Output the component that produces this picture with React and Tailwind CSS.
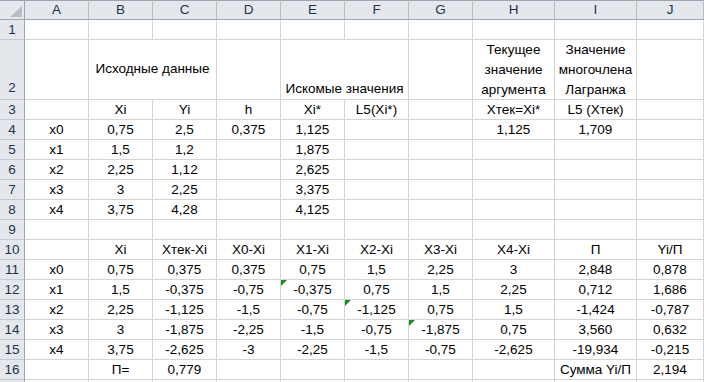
import React from "react";

const COLS = ["A", "B", "C", "D", "E", "F", "G", "H", "I", "J"];

const rows = [
  { n: 1, c: ["", "", "", "", "", "", "", "", "", ""] },
  { n: 2, special: true },
  { n: 3, c: ["", "Xi", "Yi", "h", "Xi*", "L5(Xi*)", "", "Xтек=Xi*", "L5 (Xтек)", ""] },
  { n: 4, c: ["x0", "0,75", "2,5", "0,375", "1,125", "", "", "1,125", "1,709", ""] },
  { n: 5, c: ["x1", "1,5", "1,2", "", "1,875", "", "", "", "", ""] },
  { n: 6, c: ["x2", "2,25", "1,12", "", "2,625", "", "", "", "", ""] },
  { n: 7, c: ["x3", "3", "2,25", "", "3,375", "", "", "", "", ""] },
  { n: 8, c: ["x4", "3,75", "4,28", "", "4,125", "", "", "", "", ""] },
  { n: 9, c: ["", "", "", "", "", "", "", "", "", ""] },
  { n: 10, c: ["", "Xi", "Xтек-Xi", "X0-Xi", "X1-Xi", "X2-Xi", "X3-Xi", "X4-Xi", "П", "Yi/П"] },
  { n: 11, c: ["x0", "0,75", "0,375", "0,375", "0,75", "1,5", "2,25", "3", "2,848", "0,878"] },
  { n: 12, c: ["x1", "1,5", "-0,375", "-0,75", "-0,375", "0,75", "1,5", "2,25", "0,712", "1,686"], tri: 4 },
  { n: 13, c: ["x2", "2,25", "-1,125", "-1,5", "-0,75", "-1,125", "0,75", "1,5", "-1,424", "-0,787"], tri: 5 },
  { n: 14, c: ["x3", "3", "-1,875", "-2,25", "-1,5", "-0,75", "-1,875", "0,75", "3,560", "0,632"], tri: 6 },
  { n: 15, c: ["x4", "3,75", "-2,625", "-3", "-2,25", "-1,5", "-0,75", "-2,625", "-19,934", "-0,215"] },
  { n: 16, c: ["", "П=", "0,779", "", "", "", "", "", "Сумма Yi/П", "2,194"] },
  { n: "", c: ["", "", "", "", "", "", "", "", "", ""] },
];

function RowHead({ n, tall }) {
  return (
    <div
      className={`flex justify-center border-r border-b border-r-[#9ea5ae] border-b-[#c5cad1] bg-[#e4e7eb] text-[#1d3350] ${
        tall ? "h-[60px] items-end pb-[1px]" : "h-[20px] items-center"
      }`}
    >
      {n}
    </div>
  );
}

function Tri() {
  return (
    <svg className="absolute left-0 top-0" width="6" height="6" viewBox="0 0 6 6">
      <polygon points="0,0 6,0 0,6" fill="#1e8a1e" />
    </svg>
  );
}

function Cell({ children, tri }) {
  return (
    <div className="relative flex h-[20px] items-center justify-center whitespace-nowrap border-r border-b border-[#d4d4d4] text-black">
      {tri && <Tri />}
      {children}
    </div>
  );
}

export default function App() {
  return (
    <div
      className="h-[382px] w-[704px] overflow-hidden bg-white text-[13.5px] leading-[20px]"
      style={{ fontFamily: '"Liberation Sans", Arial, sans-serif' }}
    >
      <div className="grid grid-cols-[25px_64px_64px_64px_64px_64px_64px_64px_82px_82px_67px]">
        <div className="relative h-[20px] border-t border-r border-b border-t-[#9ea5ae] border-r-[#9ea5ae] border-b-[#9ea5ae] bg-[#e4e7eb]">
          <svg className="absolute left-[10px] top-[5px]" width="12" height="11" viewBox="0 0 12 11">
            <polygon points="12,0 12,11 0,11" fill="#b9bec5" />
          </svg>
        </div>
        {COLS.map((c) => (
          <div
            key={c}
            className="flex h-[20px] items-center justify-center border-t border-r border-b border-t-[#9ea5ae] border-r-[#b9bec5] border-b-[#9ea5ae] bg-[#e4e7eb] text-[#1d3350]"
          >
            {c}
          </div>
        ))}

        {rows.map((r, idx) =>
          r.special ? (
            <React.Fragment key={idx}>
              <RowHead n={r.n} tall />
              <div className="h-[60px] border-r border-b border-[#d4d4d4]" />
              <div className="col-span-2 flex h-[60px] items-center justify-center border-r border-b border-[#d4d4d4] pb-[1px]">
                Исходные данные
              </div>
              <div className="h-[60px] border-r border-b border-[#d4d4d4]" />
              <div className="col-span-2 flex h-[60px] items-end justify-center border-r border-b border-[#d4d4d4]">
                Искомые значения
              </div>
              <div className="h-[60px] border-r border-b border-[#d4d4d4]" />
              <div className="flex h-[60px] flex-col items-center justify-center border-r border-b border-[#d4d4d4]">
                <span>Текущее</span>
                <span>значение</span>
                <span>аргумента</span>
              </div>
              <div className="flex h-[60px] flex-col items-center justify-center border-r border-b border-[#d4d4d4]">
                <span>Значение</span>
                <span>многочлена</span>
                <span>Лагранжа</span>
              </div>
              <div className="h-[60px] border-r border-b border-[#d4d4d4]" />
            </React.Fragment>
          ) : (
            <React.Fragment key={idx}>
              <RowHead n={r.n} />
              {r.c.map((v, i) => (
                <Cell key={i} tri={r.tri === i}>
                  {v}
                </Cell>
              ))}
            </React.Fragment>
          )
        )}
      </div>
    </div>
  );
}
